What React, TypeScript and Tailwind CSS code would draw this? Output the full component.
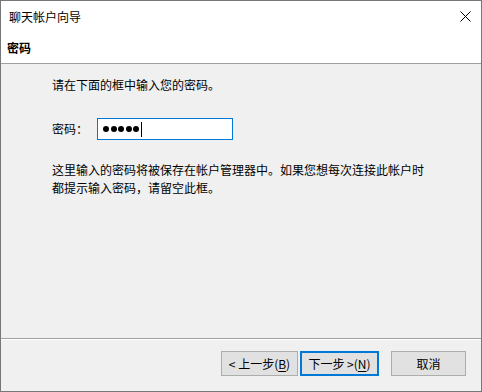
import React from 'react';

const font = "font-['Microsoft_YaHei_UI','Noto_Sans_CJK_SC',sans-serif]";

function WizardButton({
  children,
  primary = false,
  width,
}: {
  children: React.ReactNode;
  primary?: boolean;
  width: string;
}) {
  return (
    <button
      className={`${width} h-[25px] flex items-center justify-center bg-[#e1e1e1] text-[12px] leading-none text-black ${
        primary ? 'border-2 border-[#0078d7]' : 'border border-[#adadad]'
      }`}
    >
      {children}
    </button>
  );
}

export default function App() {
  return (
    <div className={`${font} w-[482px] h-[392px] flex flex-col border border-[#777777] bg-white text-black`}>
      {/* Title bar */}
      <div className="h-[30px] flex items-center justify-between pl-[8px] pr-[10px] bg-white">
        <span className="text-[12px] leading-[18px] pt-[1px]">聊天帐户向导</span>
        <svg width="11" height="11" viewBox="0 0 11 11" className="mt-[1px]">
          <path d="M0.5 0.5 L10.5 10.5 M10.5 0.5 L0.5 10.5" stroke="#000" strokeWidth="1" />
        </svg>
      </div>

      {/* Page header */}
      <div className="h-[33px] flex items-center pl-[6px] border-b border-[#a0a0a0] bg-white">
        <span className="text-[12px] leading-[18px] font-bold pt-[1px]">密码</span>
      </div>

      {/* Body */}
      <div className="flex-1 flex flex-col bg-[#f0f0f0] pl-[51px] pt-[12px]">
        <p className="text-[12px] leading-[18px]">请在下面的框中输入您的密码。</p>

        <div className="flex items-center mt-[24px]">
          <span className="text-[12px] leading-[18px] w-[45px]">密码：</span>
          <div className="w-[136px] h-[22px] bg-white border border-[#0078d7] flex items-center pl-[5px]">
            <div className="flex items-center gap-[1.5px]">
              <span className="w-[6px] h-[6px] rounded-full bg-black" />
              <span className="w-[6px] h-[6px] rounded-full bg-black" />
              <span className="w-[6px] h-[6px] rounded-full bg-black" />
              <span className="w-[6px] h-[6px] rounded-full bg-black" />
              <span className="w-[6px] h-[6px] rounded-full bg-black" />
            </div>
            <span className="ml-[2px] w-[1px] h-[15px] bg-black" />
          </div>
        </div>

        <p className="text-[12px] leading-[18px] mt-[21px] w-[380px]">
          这里输入的密码将被保存在帐户管理器中。如果您想每次连接此帐户时
          <br />
          都提示输入密码，请留空此框。
        </p>
      </div>

      {/* Footer */}
      <div className="h-[53px] flex items-start justify-end pt-[12px] pr-[15px] bg-[#f0f0f0] border-t border-[#a0a0a0] shadow-[inset_0_1px_0_#ffffff]">
        <div className="flex items-center">
          <WizardButton width="w-[77px]">
            &lt; 上一步(<span className="underline underline-offset-2">B</span>)
          </WizardButton>
          <div className="w-[2px]" />
          <WizardButton width="w-[79px]" primary>
            下一步 &gt;(<span className="underline underline-offset-2">N</span>)
          </WizardButton>
          <div className="w-[12px]" />
          <WizardButton width="w-[75px]">取消</WizardButton>
        </div>
      </div>
    </div>
  );
}
